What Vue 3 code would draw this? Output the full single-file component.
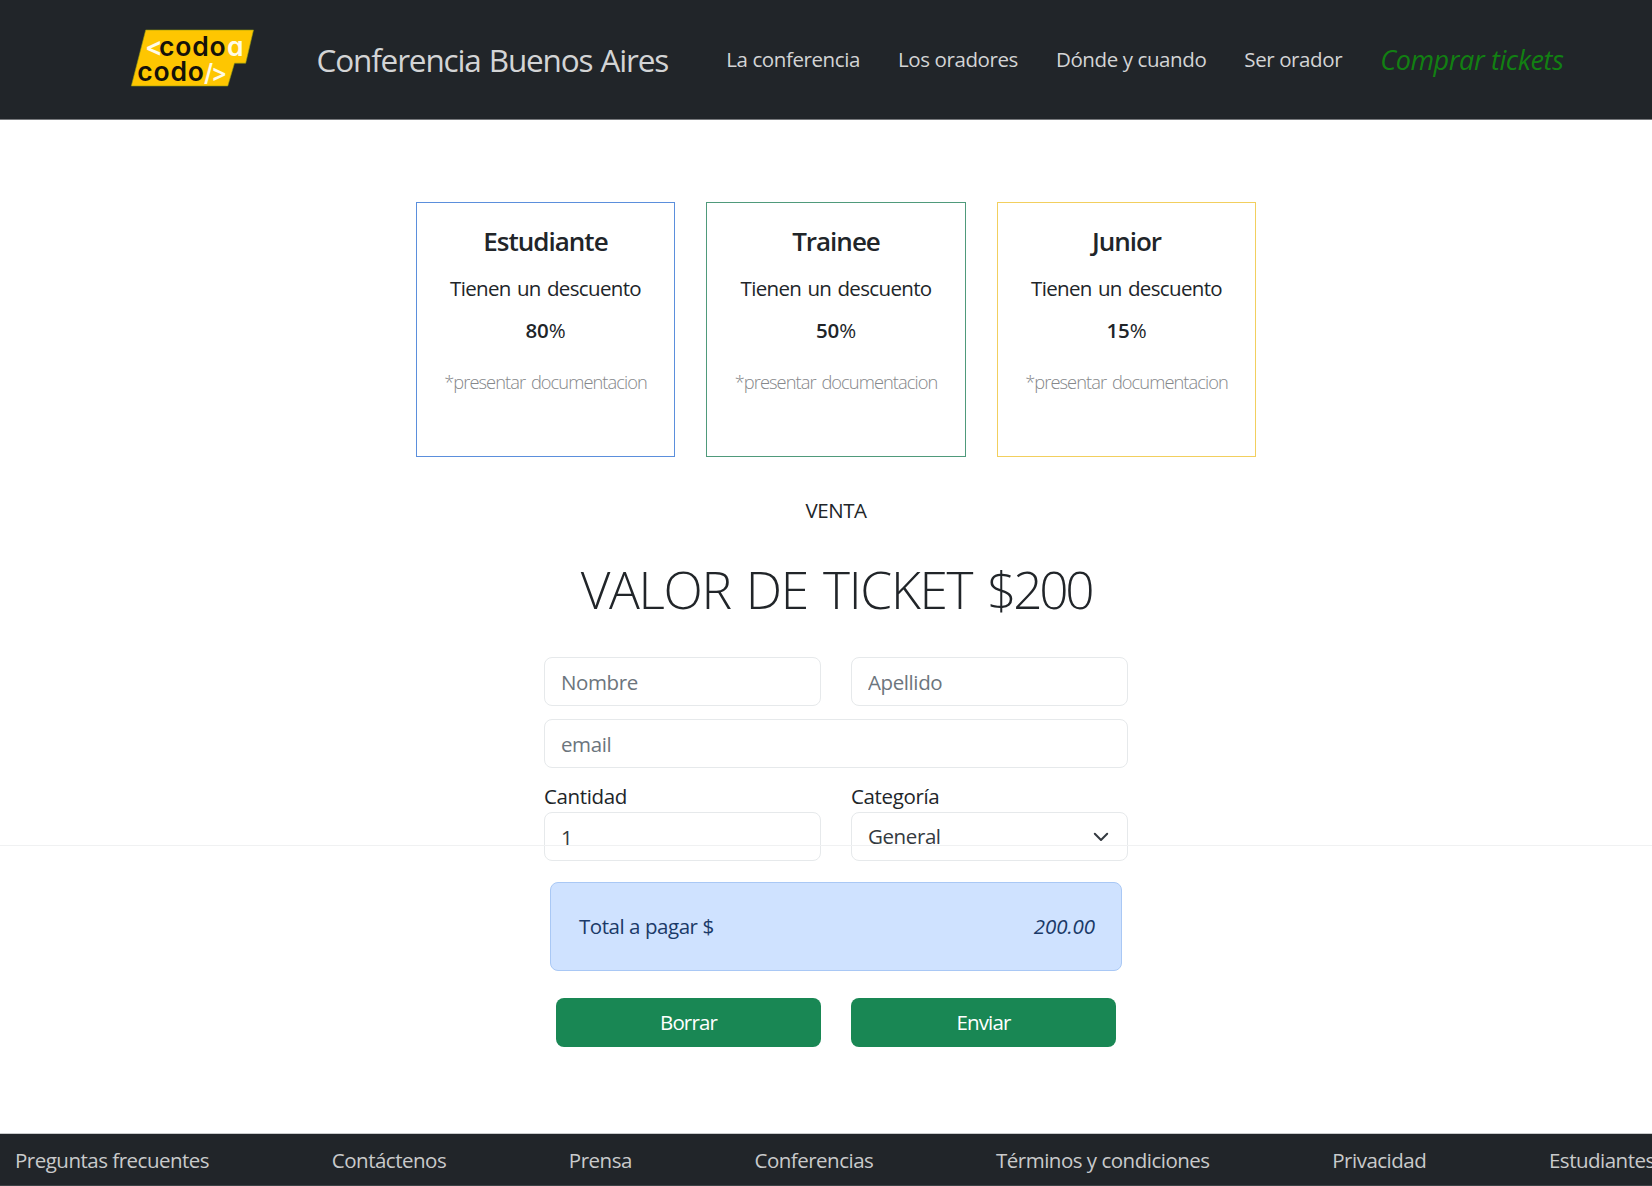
<script setup>
import { ref } from 'vue'

const quantity = ref(1)

const links = ['La conferencia', 'Los oradores', 'Dónde y cuando', 'Ser orador']

const discounts = [
  { name: 'Estudiante', amount: 80, key: 'student' },
  { name: 'Trainee', amount: 50, key: 'trainee' },
  { name: 'Junior', amount: 15, key: 'junior' },
]

const footerLinks = [
  'Preguntas frecuentes',
  'Contáctenos',
  'Prensa',
  'Conferencias',
  'Términos y condiciones',
  'Privacidad',
  'Estudiantes',
]
</script>

<template>
  <div class="page">
    <header class="nav">
      <svg class="logo" width="125" height="58" viewBox="0 0 125 58">
        <path d="M15.700 1H123.500L115.700 34.200H104.500L97.800 57H1.300Z" fill="#fec601" stroke="#8f9a12" stroke-width="0.6" />
        <text class="logo-text light" x="15" y="27">&lt;</text>
        <text class="logo-text" x="29" y="27">codo</text>
        <text class="logo-text light" x="97" y="27">a</text>
        <text class="logo-text" x="7.300" y="51.700">codo</text>
        <text class="logo-text light slash" x="74" y="51.700">/&gt;</text>
      </svg>
      <h1>Conferencia Buenos Aires</h1>
      <nav class="links">
        <a v-for="l in links" :key="l" class="link">{{ l }}</a>
        <a class="buy">Comprar tickets</a>
      </nav>
    </header>

    <main class="main">
      <section class="cards">
        <article v-for="d in discounts" :key="d.key" class="card" :class="d.key">
          <h2>{{ d.name }}</h2>
          <p class="lead">Tienen un descuento</p>
          <p class="pct"><b>{{ d.amount }}</b>%</p>
          <p class="note">*presentar documentacion</p>
        </article>
      </section>

      <p class="sale">VENTA</p>
      <p class="price">VALOR DE TICKET <span class="amount">$200</span></p>

      <form class="form" @submit.prevent>
        <div class="row">
          <input class="field" placeholder="Nombre" />
          <input class="field" placeholder="Apellido" />
        </div>
        <input class="field email" placeholder="email" />
        <div class="row labelled">
          <div class="col">
            <label>Cantidad</label>
            <input v-model="quantity" class="field" />
          </div>
          <div class="col">
            <label>Categoría</label>
            <div class="field select">
              <span>General</span>
              <svg width="16" height="16" viewBox="0 0 16 16">
                <path d="M1.800 4.800l6.200 6.200 6.200-6.200" fill="none" stroke="#343a40" stroke-width="2" stroke-linecap="round" stroke-linejoin="round" />
              </svg>
            </div>
          </div>
        </div>
        <div class="total"><span>Total a pagar $</span><em>200.00</em></div>
        <div class="buttons">
          <button class="btn" type="reset">Borrar</button>
          <button class="btn" type="submit">Enviar</button>
        </div>
      </form>
      <div class="divider"></div>
    </main>

    <footer class="footer">
      <span v-for="f in footerLinks" :key="f">{{ f }}</span>
    </footer>
  </div>
</template>

<style>
body {
  margin: 0;
  background: #fff;
}
</style>

<style scoped>
.page {
  display: flex;
  flex-direction: column;
  height: 1186px;
  overflow: hidden;
  background: #fff;
  color: #212529;
  font-family: "Open Sans", "Noto Sans", sans-serif;
  font-size: 20.5px;
  line-height: 31px;
}
h1,
h2,
p {
  margin: 0;
}
.nav {
  box-sizing: border-box;
  flex: none;
  height: 120px;
  display: flex;
  align-items: center;
  padding-left: 130px;
  background: #212529;
  border-bottom: 1px solid #77797c;
  color: #d3d4d5;
}
.logo {
  flex: none;
  margin-bottom: 3px;
}
.logo-text {
  font: 600 26.5px Inter, sans-serif;
  font-feature-settings: "cv11";
  letter-spacing: 0.8px;
  fill: #15120a;
}
.light {
  fill: #fffbe8;
}
.slash {
  font-size: 24px;
  letter-spacing: -2px;
}
h1 {
  margin-left: 61.5px;
  font-size: 31.5px;
  font-weight: 400;
  letter-spacing: -1.15px;
  word-spacing: 1px;
  white-space: nowrap;
}
.links {
  display: flex;
  align-items: center;
  margin-left: 58px;
  gap: 38px;
  white-space: nowrap;
}
.link {
  letter-spacing: -0.4px;
}
.buy {
  font-size: 27px;
  font-style: italic;
  color: #128012;
  letter-spacing: -0.38px;
}
.main {
  flex: 1;
  position: relative;
  display: flex;
  flex-direction: column;
  align-items: center;
  padding-left: 20px;
}
.cards {
  display: flex;
  gap: 31px;
  margin-top: 82px;
}
.card {
  box-sizing: border-box;
  width: 259.5px;
  height: 255px;
  padding-top: 22px;
  border: 1px solid #5b8fdc;
  text-align: center;
  white-space: nowrap;
}
.trainee {
  border-color: #4f9a7b;
}
.junior {
  border-color: #f2cf5e;
}
h2 {
  font-size: 26px;
  line-height: 32px;
  font-weight: 600;
  letter-spacing: -1px;
}
.lead {
  margin-top: 16px;
  letter-spacing: -0.65px;
  word-spacing: 1.5px;
}
.pct {
  margin-top: 11px;
  letter-spacing: -0.2px;
}
.pct b {
  font-weight: 600;
}
.note {
  margin-top: 20px;
  font-size: 18.3px;
  font-weight: 300;
  color: #85878a;
  letter-spacing: -0.95px;
  word-spacing: 2px;
}
.sale {
  margin-top: 38px;
  letter-spacing: -0.5px;
}
.price {
  margin-top: 28px;
  font-size: 51.4px;
  line-height: 70px;
  font-weight: 300;
  letter-spacing: -1.3px;
  word-spacing: 3px;
}
.amount {
  letter-spacing: -3.3px;
}
.form {
  width: 584px;
  margin-top: 33px;
}
.row {
  display: flex;
  gap: 30px;
}
.row > * {
  flex: 1;
  min-width: 0;
}
.field {
  display: block;
  box-sizing: border-box;
  width: 100%;
  height: 49px;
  padding: 0 16px;
  border: 1px solid #e6e9eb;
  border-radius: 8px;
  background: transparent;
  color: #343a40;
  font: inherit;
  letter-spacing: -0.4px;
  outline: none;
}
.field::placeholder {
  color: #6c757d;
  opacity: 1;
}
.email {
  margin-top: 13px;
}
.labelled {
  margin-top: 13px;
}
.labelled label {
  display: block;
  letter-spacing: -0.35px;
}
.select {
  display: flex;
  align-items: center;
  justify-content: space-between;
  padding-right: 18px;
}
.total {
  box-sizing: border-box;
  display: flex;
  align-items: center;
  justify-content: space-between;
  height: 89px;
  margin: 21px 6px 0;
  padding: 0 26px 0 28px;
  border: 1px solid #a9c8f5;
  border-radius: 8px;
  background: #cfe2ff;
  color: #1b3a68;
  letter-spacing: -0.45px;
}
.total em {
  letter-spacing: -0.05px;
}
.buttons {
  display: flex;
  gap: 30px;
  margin: 27px 12px 0;
}
.btn {
  flex: 1;
  height: 49px;
  padding: 0;
  border: 0;
  border-radius: 8px;
  background: #198754;
  color: #fff;
  font: inherit;
  letter-spacing: -0.85px;
}
.divider {
  position: absolute;
  left: 0;
  right: 0;
  top: 725px;
  height: 1px;
  background: #f0f1f2;
}
.footer {
  box-sizing: border-box;
  flex: none;
  height: 53px;
  display: flex;
  align-items: center;
  gap: 122.7px;
  padding: 1px 0 0 15px;
  border-top: 1px solid #c9cbcc;
  border-bottom: 1px solid #3c4145;
  background: #212529;
  color: #c9cacb;
  letter-spacing: -0.5px;
  white-space: nowrap;
}
</style>
